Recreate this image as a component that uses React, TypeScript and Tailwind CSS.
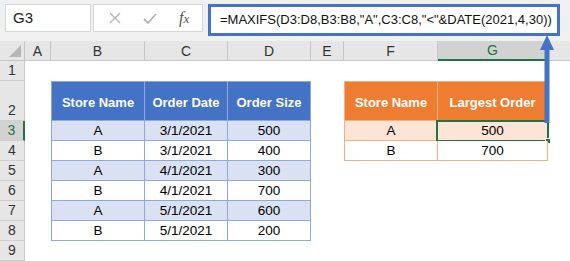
import React from "react";

type Order = { store: string; date: string; size: number };

const orders: Order[] = [
  { store: "A", date: "3/1/2021", size: 500 },
  { store: "B", date: "3/1/2021", size: 400 },
  { store: "A", date: "4/1/2021", size: 300 },
  { store: "B", date: "4/1/2021", size: 700 },
  { store: "A", date: "5/1/2021", size: 600 },
  { store: "B", date: "5/1/2021", size: 200 },
];

const largest = [
  { store: "A", value: 500 },
  { store: "B", value: 700 },
];

const letters = ["A", "B", "C", "D", "E", "F", "G", ""];
const rowHeights = ["h-[20px]", "h-[40px]", "h-[20px]", "h-[20px]", "h-[20px]", "h-[20px]", "h-[20px]", "h-[20px]", "h-[20px]"];

function FormulaBar() {
  return (
    <div className="flex h-[41px] items-start bg-[#f0f0f0] pt-[4px]">
      <div className="ml-[5px] flex h-[28px] w-[86px] items-center border border-[#d6d6d6] bg-white pl-[7px] text-[15px] text-[#222]">
        G3
      </div>
      <div className="ml-[2px] flex h-[28px] w-[110px] items-center border border-[#d6d6d6] bg-white">
        <svg width="14" height="14" viewBox="0 0 14 14" className="ml-[14px]">
          <path d="M2 2 L12 12 M12 2 L2 12" stroke="#b4b4b4" strokeWidth="1.4" fill="none" />
        </svg>
        <svg width="16" height="14" viewBox="0 0 16 14" className="ml-[20px]">
          <path d="M2 8 L6 12 L14 3" stroke="#b4b4b4" strokeWidth="1.8" fill="none" />
        </svg>
        <span className="ml-[21px] font-['Liberation_Serif',serif] text-[16px] italic text-[#555]">
          f<span className="text-[13px]">x</span>
        </span>
      </div>
      <div className="ml-[5px] flex h-[32px] w-[352px] items-center whitespace-nowrap border-[3px] border-[#4472c4] bg-white pl-[9px] text-[13px] text-[#111]">
        =MAXIFS(D3:D8,B3:B8,"A",C3:C8,"&lt;"&amp;DATE(2021,4,30))
      </div>
    </div>
  );
}

function tableCell(row: number, col: number) {
  // row: sheet row (1-based), col: 1=A ... 7=G, 8=overflow
  if (row === 2 && col >= 2 && col <= 4) {
    const label = ["Store Name", "Order Date", "Order Size"][col - 2];
    return (
      <div
        className={`flex items-center justify-center border-t border-b border-r border-[#8ea9db] bg-[#4472c4] pt-[3px] text-[13px] font-bold text-white ${col === 2 ? "border-l" : ""}`}
      >
        {label}
      </div>
    );
  }
  if (row >= 3 && row <= 8 && col >= 2 && col <= 4) {
    const o = orders[row - 3];
    const text = col === 2 ? o.store : col === 3 ? o.date : String(o.size);
    return (
      <div
        className={`flex items-center justify-center border-b border-r border-[#8ea9db] text-[13.5px] text-black ${row % 2 === 1 ? "bg-[#d9e1f2]" : "bg-white"} ${col === 2 ? "border-l" : ""}`}
      >
        {text}
      </div>
    );
  }
  if (row === 2 && (col === 6 || col === 7)) {
    return (
      <div
        className={`flex items-center justify-center border-t border-b border-r border-[#f4b084] bg-[#ed7d31] pt-[3px] text-[13px] font-bold text-white ${col === 6 ? "border-l" : ""}`}
      >
        {col === 6 ? "Store Name" : "Largest Order"}
      </div>
    );
  }
  if ((row === 3 || row === 4) && (col === 6 || col === 7)) {
    const r = largest[row - 3];
    return (
      <div
        className={`relative flex items-center justify-center border-b border-r border-[#f4b084] text-[13.5px] text-black ${row === 3 ? "bg-[#fce4d6]" : "bg-white"} ${col === 6 ? "border-l" : ""}`}
      >
        {col === 6 ? r.store : r.value}
        {row === 3 && col === 7 ? (
          <>
            <div className="absolute -left-[2px] -top-px right-[-2px] bottom-[-2px] border-2 border-[#217346]" />
            <div className="absolute -bottom-[4px] -right-[4px] h-[6px] w-[6px] border border-white bg-[#217346]" />
          </>
        ) : null}
      </div>
    );
  }
  return <div className="bg-white" />;
}

export default function App() {
  return (
    <div className="relative h-[261px] w-[570px] overflow-hidden bg-white font-['Liberation_Sans',Arial,sans-serif] leading-[18px]">
      <FormulaBar />
      <div className="grid grid-cols-[25px_26px_94px_83px_83px_33px_94px_110px_1fr]">
        {/* column headers */}
        <div className="relative h-[20px] border-r border-b border-[#c6c6c6] bg-[#e6e6e6]">
          <svg width="12" height="12" viewBox="0 0 12 12" className="absolute bottom-[3px] right-[3px]">
            <path d="M12 0 L12 12 L0 12 Z" fill="#b7b7b7" />
          </svg>
        </div>
        {letters.map((l, i) => (
          <div
            key={i}
            className={`flex h-[20px] items-center justify-center text-[14px] ${
              l === "G"
                ? "border-b-2 border-b-[#217346] bg-[#d2d2d2] text-[#217346]"
                : "border-b border-[#c6c6c6] bg-[#e6e6e6] text-[#333]"
            } ${i < letters.length - 1 ? "border-r border-r-[#c6c6c6]" : ""}`}
          >
            {l}
          </div>
        ))}
        {rowHeights.map((h, idx) => {
          const row = idx + 1;
          const selected = row === 3;
          return (
            <React.Fragment key={row}>
              <div
                className={`flex ${h} items-end justify-center pb-[1px] text-[14px] ${
                  selected
                    ? "border-r-2 border-r-[#217346] bg-[#d2d2d2] text-[#217346]"
                    : "border-r border-r-[#c6c6c6] bg-[#e6e6e6] text-[#333]"
                } border-b border-b-[#d0d0d0]`}
              >
                {row}
              </div>
              {[1, 2, 3, 4, 5, 6, 7, 8].map((col) => (
                <React.Fragment key={col}>{tableCell(row, col)}</React.Fragment>
              ))}
            </React.Fragment>
          );
        })}
      </div>
      {/* pointer from the formula box down to the selected cell */}
      <svg width="20" height="92" viewBox="0 0 20 92" className="absolute left-[537px] top-[33px]">
        <path d="M10 2 L17 17 L12.5 17 L12.5 90 L7.5 90 L7.5 17 L3 17 Z" fill="#4472c4" />
      </svg>
    </div>
  );
}
